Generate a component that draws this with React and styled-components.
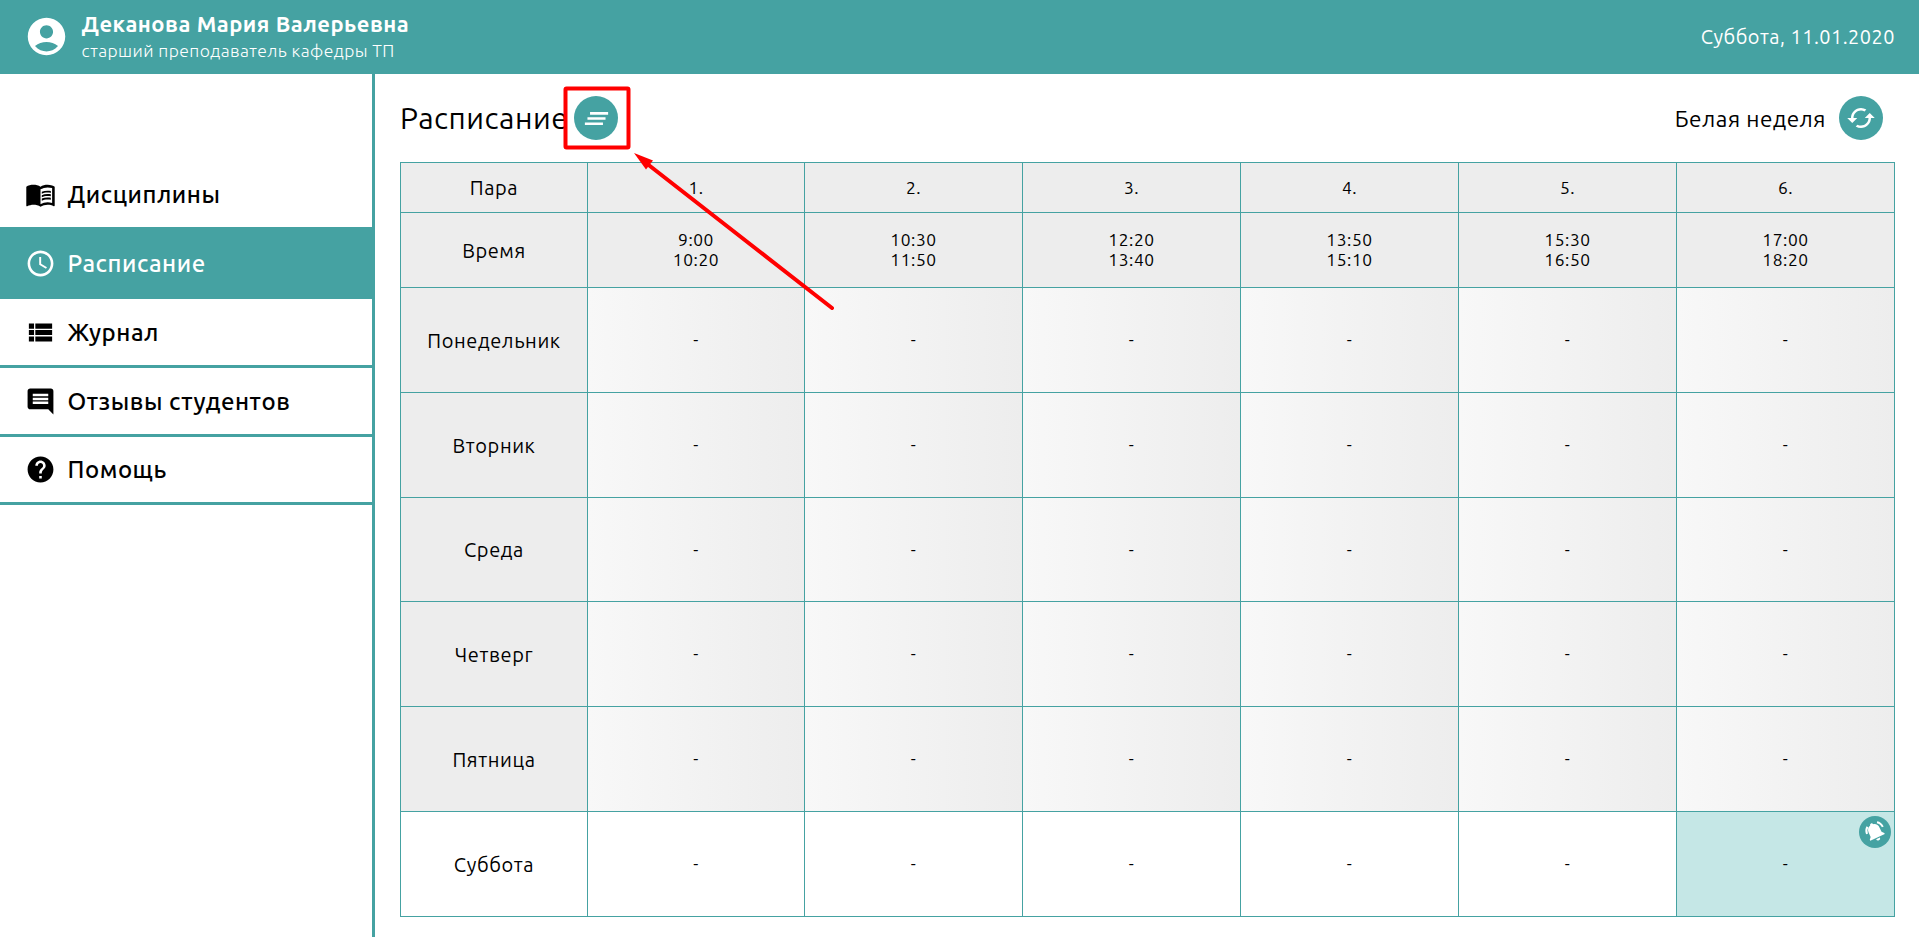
import React from 'react';
import styled, { createGlobalStyle } from 'styled-components';
import {
  MdAccountCircle, MdMenuBook, MdAccessTime, MdViewList, MdComment, MdHelp, MdClearAll, MdCached,
} from 'react-icons/md';

const TEAL = '#45a2a2';

const GlobalStyle = createGlobalStyle`
  * { box-sizing: border-box; }
  body { margin: 0; background: #fff; color: #000; font-family: "Ubuntu", "Noto Sans", sans-serif; overflow: hidden; }
`;

const Page = styled.div`
  display: flex;
  flex-direction: column;
  height: 937px;
`;

const Header = styled.header`
  display: flex;
  align-items: center;
  height: 74px;
  flex: none;
  padding: 0 24px 0 24px;
  background: ${TEAL};
  color: #fff;
`;

const Avatar = styled(MdAccountCircle)`
  flex: none;
  width: 45px;
  height: 45px;
  margin-bottom: 2px;
`;

const Teacher = styled.div`
  flex: 1;
  padding-left: 12.5px;
`;

const TeacherName = styled.div`
  font-size: 22px;
  font-weight: 600;
  line-height: 27px;
  letter-spacing: 0.5px;
`;

const TeacherPost = styled.div`
  font-size: 17.5px;
  font-weight: 300;
  line-height: 27px;
  letter-spacing: 0.42px;
`;

const Today = styled.div`
  padding-bottom: 1px;
  font-size: 19.9px;
  letter-spacing: 0.5px;
`;

const Body = styled.div`
  display: flex;
  flex: 1;
  min-height: 0;
`;

const Sidebar = styled.nav`
  width: 375px;
  flex: none;
  padding-top: 87px;
  border-right: 3px solid ${TEAL};
`;

const MenuItem = styled.a`
  display: flex;
  align-items: center;
  gap: 12px;
  height: ${(p) => p.$height || 69}px;
  padding-left: 24.5px;
  border-bottom: 3px solid ${TEAL};
  background: ${(p) => (p.$active ? TEAL : 'transparent')};
  color: ${(p) => (p.$active ? '#fff' : '#000')};
  font-size: 24px;
  font-weight: 500;
  letter-spacing: 0.53px;

  svg { flex: none; }
`;

const Main = styled.main`
  flex: 1;
  padding: 22px 24px 0 25px;
`;

const TitleBar = styled.div`
  display: flex;
  align-items: center;
  height: 44px;
  margin-bottom: 22px;
  padding-right: 12px;
`;

const Title = styled.h1`
  margin: 0;
  flex: none;
  width: 174px;
  font-size: 30px;
  font-weight: 400;
  letter-spacing: 0.5px;
`;

const Week = styled.div`
  margin-left: auto;
  margin-right: 13px;
  font-size: 22.6px;
  letter-spacing: 0.5px;
`;

const RoundButton = styled.button`
  display: flex;
  align-items: center;
  justify-content: center;
  width: 44px;
  height: 44px;
  padding: 0;
  border: 0;
  border-radius: 50%;
  background: ${TEAL};
  color: #fff;
`;

const Table = styled.div`
  display: grid;
  grid-template-columns: 187px 217px repeat(5, 218px);
  grid-template-rows: 50px 75px 105px 105px 104px repeat(3, 105px);
  width: 1495px;
  border: solid ${TEAL};
  border-width: 1px 0 0 1px;
`;

const Cell = styled.div`
  position: relative;
  display: flex;
  align-items: center;
  justify-content: center;
  border: solid ${TEAL};
  border-width: 0 1px 1px 0;
  background: ${(p) => p.$fill || '#fff'};
  font-size: 17.4px;
  line-height: 20px;
  letter-spacing: 0.55px;
  text-align: center;
`;

const DayCell = styled(Cell)`
  padding-top: 1.5px;
  font-size: 20px;
  letter-spacing: 0.6px;
`;

const BellBadge = styled.span`
  position: absolute;
  top: 4px;
  right: 3.5px;
  display: flex;
  width: 32px;
  height: 32px;
  border-radius: 50%;
  background: ${TEAL};
`;

const Annotation = styled.svg`
  position: absolute;
  left: 560px;
  top: 80px;
  pointer-events: none;
`;

const menu = [
  { label: 'Дисциплины', Icon: MdMenuBook },
  { label: 'Расписание', Icon: MdAccessTime, active: true },
  { label: 'Журнал', Icon: MdViewList },
  { label: 'Отзывы студентов', Icon: MdComment },
  { label: 'Помощь', Icon: MdHelp, height: 68 },
];

const times = [
  ['9:00', '10:20'], ['10:30', '11:50'], ['12:20', '13:40'],
  ['13:50', '15:10'], ['15:30', '16:50'], ['17:00', '18:20'],
];

const days = ['Понедельник', 'Вторник', 'Среда', 'Четверг', 'Пятница', 'Суббота'];

const GREY = '#ededed';
const PAST = 'linear-gradient(to right, #f8f8f8, #ededed)';

function Bell() {
  return (
    <svg width="32" height="32" viewBox="0 0 32 32" fill="#fff">
      <g transform="rotate(-25 16 16)">
        <path d="M16 6.5c-1 0-1.6.7-1.6 1.6-3 .7-4.4 3-4.4 5.9v4.6L8 20.8V22h16v-1.200l-2-2.200V14c0-2.900-1.500-5.200-4.400-5.900 0-.9-.6-1.600-1.600-1.600z" />
        <path d="M14 23h4.200a2.100 2.100 0 0 1-4.200 0z" />
      </g>
      <g fill="none" stroke="#fff" strokeWidth="2">
        <path d="M8 18c-1-2.500-.9-5 .4-7.300" />
        <path d="M18 6.300c2.500.4 4.500 2 5.800 4.600" />
      </g>
    </svg>
  );
}

export default function App() {
  return (
    <Page>
      <GlobalStyle />
      <Header>
        <Avatar />
        <Teacher>
          <TeacherName>Деканова Мария Валерьевна</TeacherName>
          <TeacherPost>старший преподаватель кафедры ТП</TeacherPost>
        </Teacher>
        <Today>Суббота, 11.01.2020</Today>
      </Header>
      <Body>
        <Sidebar>
          {menu.map(({ label, Icon, active, height }) => (
            <MenuItem key={label} $active={active} $height={height}>
              <Icon size={31} />
              {label}
            </MenuItem>
          ))}
        </Sidebar>
        <Main>
          <TitleBar>
            <Title>Расписание</Title>
            <RoundButton><MdClearAll size={31} /></RoundButton>
            <Week>Белая неделя</Week>
            <RoundButton><MdCached size={30} /></RoundButton>
          </TitleBar>
          <Table>
            <DayCell $fill={GREY}>Пара</DayCell>
            {times.map((_, i) => <Cell key={i} $fill={GREY}>{i + 1}.</Cell>)}
            <DayCell $fill={GREY}>Время</DayCell>
            {times.map(([from, to]) => <Cell key={from} $fill={GREY}>{from}<br />{to}</Cell>)}
            {days.map((day, d) => {
              const today = d === days.length - 1;
              return (
                <React.Fragment key={day}>
                  <DayCell $fill={today ? '#fff' : GREY}>{day}</DayCell>
                  {times.map((_, i) => {
                    const next = today && i === times.length - 1;
                    return (
                      <Cell key={i} $fill={next ? '#c5e7e6' : today ? '#fff' : PAST}>
                        -
                        {next && <BellBadge><Bell /></BellBadge>}
                      </Cell>
                    );
                  })}
                </React.Fragment>
              );
            })}
          </Table>
        </Main>
      </Body>
      <Annotation width="300" height="240">
        <rect x="5.500" y="8.500" width="63" height="59" rx="1" fill="none" stroke="#f00" strokeWidth="4" />
        <path d="M88 84.500L272 228" stroke="#f00" strokeWidth="4" strokeLinecap="round" />
        <path d="M74 73L93 80.500L86 89.500Z" fill="#f00" />
      </Annotation>
    </Page>
  );
}
